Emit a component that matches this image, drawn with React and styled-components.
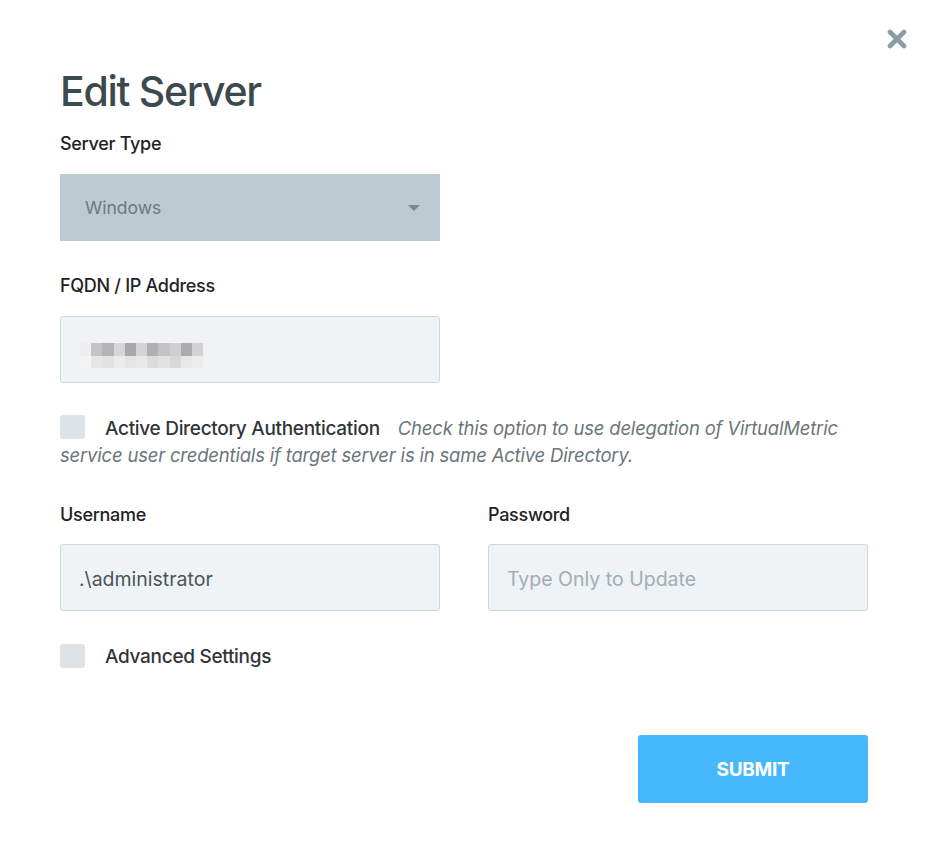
import React from "react";
import styled, { createGlobalStyle } from "styled-components";

const GlobalStyle = createGlobalStyle`
  body {
    margin: 0;
    background: #ffffff;
    font-family: Inter, "Noto Sans", sans-serif;
  }
`;

const redacted = [
  ["#eeeeee", "#c4c4c4", "#b4b4b4", "#d6d6d6", "#a9a9a9", "#d4d4d4", "#b0b0b0", "#c3c3c3", "#cfcfcf", "#acacac", "#d3d3d3"],
  ["#f4f4f4", "#e6e6e6", "#e2e2e2", "#ebebeb", "#e4e4e4", "#e9e9e9", "#dcdcdc", "#e2e2e2", "#d8d8d8", "#e8e8e8", "#ececec"],
];

const App = () => (
  <Dialog>
    <GlobalStyle />
    <TopBar>
      <CloseButton aria-label="Close">
        <svg width="20" height="20" viewBox="0 0 20 20">
          <path
            d="M3 3 L17 17 M17 3 L3 17"
            stroke="#8c9ca4"
            strokeWidth="4.6"
            strokeLinecap="round"
          />
        </svg>
      </CloseButton>
    </TopBar>
    <Body>
      <Title>Edit Server</Title>

      <Label>Server Type</Label>
      <Select>
        <span>Windows</span>
        <Caret />
      </Select>

      <Label $top={35}>FQDN / IP Address</Label>
      <Field>
        <Pixels>
          {redacted.map((row, r) => (
            <PixelRow key={r}>
              {row.map((c, i) => (
                <Pixel key={i} style={{ background: c }} />
              ))}
            </PixelRow>
          ))}
        </Pixels>
      </Field>

      <CheckLine $top={32}>
        <Box />
        <CheckLabel>Active Directory Authentication</CheckLabel>
        <Hint>
          Check this option to use delegation of VirtualMetric service user
          credentials if target server is in same Active Directory.
        </Hint>
      </CheckLine>

      <Columns>
        <div>
          <Label $top={0}>Username</Label>
          <Field $tight>
            <Value>.\administrator</Value>
          </Field>
        </div>
        <div>
          <Label $top={0}>Password</Label>
          <Field $tight>
            <Value $placeholder>Type Only to Update</Value>
          </Field>
        </div>
      </Columns>

      <CheckLine $top={33}>
        <Box />
        <CheckLabel>Advanced Settings</CheckLabel>
      </CheckLine>

      <Footer>
        <Submit>SUBMIT</Submit>
      </Footer>
    </Body>
  </Dialog>
);

const Dialog = styled.div`
  width: 925px;
  min-height: 848px;
  box-sizing: border-box;
  padding-top: 29px;
  background: #ffffff;
`;

const TopBar = styled.div`
  display: flex;
  justify-content: flex-end;
  padding-right: 18px;
  height: 20px;
`;

const CloseButton = styled.div`
  width: 20px;
  height: 20px;
  display: flex;
  cursor: pointer;
`;

const Body = styled.div`
  padding: 0 57px 0 60px;
`;

const Title = styled.h1`
  margin: 19px 0 0;
  font-size: 41px;
  line-height: 46px;
  font-weight: 500;
  letter-spacing: -1.3px;
  color: #3c4a50;
`;

const Label = styled.div`
  margin-top: ${(p) => (p.$top ?? 20)}px;
  font-size: 18px;
  line-height: 20px;
  font-weight: 500;
  letter-spacing: -0.3px;
  color: #1e2224;
`;

const Select = styled.div`
  margin-top: 20px;
  width: 380px;
  height: 67px;
  box-sizing: border-box;
  padding: 0 20px 0 25px;
  display: flex;
  align-items: center;
  justify-content: space-between;
  background: #bccbd1;
  font-size: 17.5px;
  color: #6a7a81;
`;

const Caret = styled.span`
  width: 0;
  height: 0;
  border-left: 6px solid transparent;
  border-right: 6px solid transparent;
  border-top: 6px solid #7b878c;
  margin-top: 1px;
`;

const Field = styled.div`
  margin-top: ${(p) => (p.$tight ? 19 : 20)}px;
  width: 380px;
  height: 67px;
  box-sizing: border-box;
  padding: 0 18px;
  display: flex;
  align-items: center;
  background: #eff3f6;
  border: 1px solid #cfd8dc;
  border-radius: 3px;
`;

const Pixels = styled.div`
  display: flex;
  flex-direction: column;
  margin-left: 1px;
  margin-top: 12px;
`;

const PixelRow = styled.div`
  display: flex;
  height: 12.5px;
`;

const Pixel = styled.span`
  width: 11.2px;
  height: 12.5px;
`;

const Value = styled.span`
  font-size: 19.5px;
  letter-spacing: 0;
  color: ${(p) => (p.$placeholder ? "#a3aeb3" : "#4b5559")};
  margin-top: 2px;
`;

const CheckLine = styled.div`
  margin-top: ${(p) => p.$top}px;
  font-size: 19px;
  line-height: 26px;
  color: #2d3336;
`;

const Box = styled.span`
  display: inline-block;
  vertical-align: top;
  width: 25px;
  height: 24px;
  margin-right: 20px;
  background: #dce4e8;
  border-radius: 3px;
`;

const CheckLabel = styled.span`
  font-weight: 500;
  font-size: 19px;
  letter-spacing: -0.3px;
  color: #2f3538;
`;

const Hint = styled.em`
  margin-left: 18px;
  font-style: italic;
  font-size: 18.5px;
  letter-spacing: -0.2px;
  color: #6c767b;
`;

const Columns = styled.div`
  margin-top: 36px;
  display: grid;
  grid-template-columns: 380px 380px;
  column-gap: 48px;
`;

const Footer = styled.div`
  margin-top: 65px;
  display: flex;
  justify-content: flex-end;
`;

const Submit = styled.button`
  width: 230px;
  height: 68px;
  border: none;
  border-radius: 3px;
  background: #46b9fd;
  color: #ffffff;
  font-family: Inter, "Noto Sans", sans-serif;
  font-size: 19px;
  font-weight: 700;
  letter-spacing: -0.3px;
  cursor: pointer;
`;

export default App;
